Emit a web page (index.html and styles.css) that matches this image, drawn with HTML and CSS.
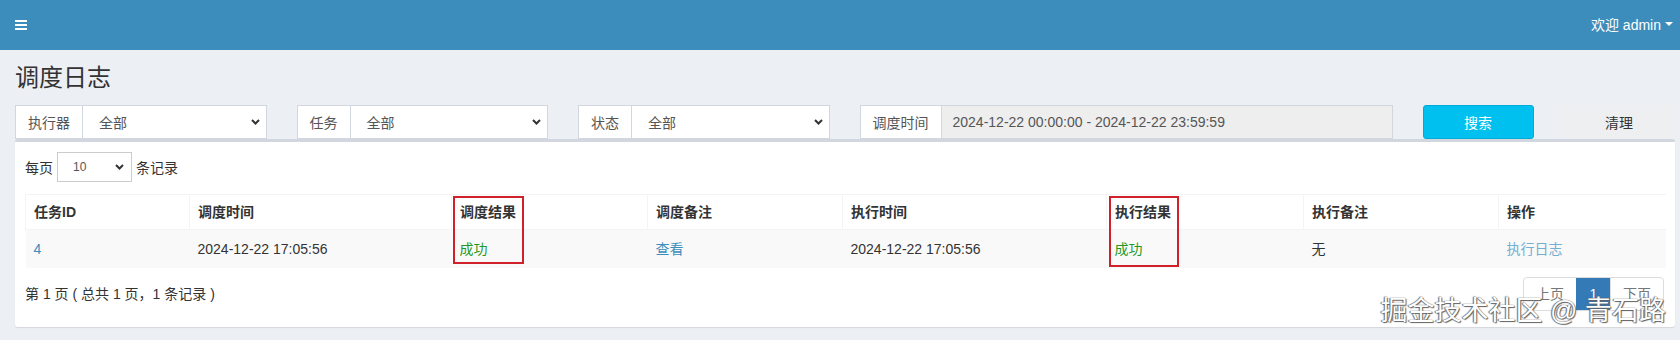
FILE: index.html
```html
<!DOCTYPE html>
<html lang="zh-CN">
<head>
  <meta charset="UTF-8">
  <meta name="viewport" content="width=device-width, initial-scale=1.0">
  <title>调度日志</title>
  <link rel="stylesheet" href="styles.css">
</head>
<body>
  <header class="topbar">
    <a class="menu-toggle" href="#">
      <svg width="12" height="10" viewBox="0 0 12 10"><rect y="0" width="12" height="2" fill="#fff"/><rect y="4" width="12" height="2" fill="#fff"/><rect y="8" width="12" height="2" fill="#fff"/></svg>
    </a>
    <div class="user-menu">欢迎 admin <span class="caret"></span></div>
  </header>

  <main class="content">
    <h1 class="page-title">调度日志</h1>

    <div class="filters">
      <div class="field">
        <span class="field-label">执行器</span>
        <div class="field-input">全部
          <svg class="chevron" width="9" height="6" viewBox="0 0 9 6"><path d="M1 1l3.5 3.5L8 1" stroke="#333" stroke-width="2" fill="none"/></svg>
        </div>
      </div>
      <div class="field">
        <span class="field-label">任务</span>
        <div class="field-input">全部
          <svg class="chevron" width="9" height="6" viewBox="0 0 9 6"><path d="M1 1l3.5 3.5L8 1" stroke="#333" stroke-width="2" fill="none"/></svg>
        </div>
      </div>
      <div class="field">
        <span class="field-label">状态</span>
        <div class="field-input">全部
          <svg class="chevron" width="9" height="6" viewBox="0 0 9 6"><path d="M1 1l3.5 3.5L8 1" stroke="#333" stroke-width="2" fill="none"/></svg>
        </div>
      </div>
      <div class="field">
        <span class="field-label">调度时间</span>
        <div class="field-input readonly">2024-12-22 00:00:00 - 2024-12-22 23:59:59</div>
      </div>
      <button class="btn btn-search">搜索</button>
      <button class="btn btn-clear">清理</button>
    </div>

    <section class="box">
      <div class="length">
        每页
        <div class="length-select">10
          <svg class="chevron" width="9" height="6" viewBox="0 0 9 6"><path d="M1 1l3.5 3.5L8 1" stroke="#333" stroke-width="2" fill="none"/></svg>
        </div>
        条记录
      </div>

      <table class="log-table">
        <colgroup>
          <col style="width:164px"><col style="width:262px"><col style="width:196px"><col style="width:195px">
          <col style="width:264px"><col style="width:197px"><col style="width:195px"><col style="width:167px">
        </colgroup>
        <thead>
          <tr>
            <th>任务ID</th><th>调度时间</th><th>调度结果</th><th>调度备注</th>
            <th>执行时间</th><th>执行结果</th><th>执行备注</th><th>操作</th>
          </tr>
        </thead>
        <tbody>
          <tr>
            <td><a class="link" href="#">4</a></td>
            <td>2024-12-22 17:05:56</td>
            <td><span class="ok">成功</span></td>
            <td><a class="link" href="#">查看</a></td>
            <td>2024-12-22 17:05:56</td>
            <td><span class="ok">成功</span></td>
            <td>无</td>
            <td><a class="link light" href="#">执行日志</a></td>
          </tr>
        </tbody>
      </table>

      <div class="table-foot">
        <div class="info">第 1 页 ( 总共 1 页，1 条记录 )</div>
        <ul class="pager">
          <li>上页</li>
          <li class="active">1</li>
          <li>下页</li>
        </ul>
      </div>

      <div class="mark mark-a"></div>
      <div class="mark mark-b"></div>
      <div class="watermark">掘金技术社区 @ 青石路</div>
    </section>
  </main>
</body>
</html>
```

FILE: styles.css
```css
body {
  margin: 0;
  font-family: "Liberation Sans", Arial, "Noto Sans CJK SC", sans-serif;
  font-size: 14px;
  color: #333;
  background-color: #ecf0f5;
}
.topbar {
  height: 50px;
  background: #3c8dbc;
  color: #fff;
  display: flex;
  align-items: center;
  justify-content: space-between;
}
.menu-toggle {
  display: flex;
  padding: 0 15px;
  margin-top: -1px;
}
.user-menu {
  display: flex;
  align-items: center;
  gap: 4px;
  padding-right: 7px;
  margin-top: -2px;
}
.caret {
  width: 0;
  height: 0;
  border-top: 4px solid #fff;
  border-left: 4px solid transparent;
  border-right: 4px solid transparent;
}
.content {
  padding: 15px 5px 15px 15px;
}
.page-title {
  margin: 0;
  font-size: 24px;
  line-height: 26px;
  font-weight: 400;
  color: #333;
}
.filters {
  margin-top: 14px;
  display: grid;
  grid-template-columns: 251.5px 251.5px 251.5px 533px 111px 111px;
  column-gap: 30px;
}
.field {
  display: flex;
  height: 34px;
}
.field-label {
  display: flex;
  align-items: center;
  padding: 0 12px;
  background: #fff;
  color: #555;
  border: 1px solid #d2d6de;
  border-right: 0;
}
.field-input {
  flex: 1;
  display: flex;
  align-items: center;
  justify-content: space-between;
  padding: 0 6px 0 16px;
  background: #fff;
  color: #555;
  border: 1px solid #d2d6de;
}
.field-input.readonly {
  background: #eee;
  padding-left: 11px;
}
.btn {
  height: 34px;
  font-family: inherit;
  font-size: 14px;
  border: 1px solid transparent;
  border-radius: 3px;
  cursor: pointer;
}
.btn-search {
  background: #00c0ef;
  border-color: #00acd6;
  color: #fff;
}
.btn-clear {
  background: #eeeff1;
  color: #333;
}
.box {
  position: relative;
  margin-top: 0;
  padding: 10px;
  background: #fff;
  border-top: 3px solid #d2d6de;
  border-radius: 3px;
  box-shadow: 0 1px 1px rgba(0, 0, 0, 0.1);
}
.length {
  display: flex;
  align-items: center;
  height: 30px;
}
.length-select {
  width: 75px;
  height: 30px;
  box-sizing: border-box;
  margin: 0 4px;
  padding: 0 7px 0 15px;
  display: flex;
  align-items: center;
  justify-content: space-between;
  border: 1px solid #ccc;
  font-size: 12px;
  color: #555;
}
.log-table {
  width: 100%;
  margin-top: 12px;
  border-collapse: collapse;
  table-layout: fixed;
}
.log-table th {
  padding: 7px 8px;
  text-align: left;
  line-height: 20px;
  font-weight: bold;
  border-top: 1px solid #f4f4f4;
  border-bottom: 1px solid #f4f4f4;
  border-left: 1px solid #f4f4f4;
}
.log-table td {
  padding: 9px 8px;
  line-height: 20px;
  background: #f9f9f9;
}
.link {
  color: #3c8dbc;
  text-decoration: none;
}
.link.light {
  color: #72afd2;
}
.ok {
  color: #1f9a1f;
}
.table-foot {
  display: flex;
  justify-content: space-between;
  align-items: flex-start;
  margin-top: 9px;
  margin-bottom: 6px;
}
.info {
  padding-top: 7px;
  line-height: 20px;
}
.pager {
  display: flex;
  list-style: none;
  margin: 0 1px 0 0;
  padding: 0;
  border: 1px solid #ddd;
  border-radius: 4px;
  overflow: hidden;
}
.pager li {
  width: 52px;
  padding: 6px 0;
  text-align: center;
  line-height: 20px;
  color: #777;
  border-left: 1px solid #ddd;
}
.pager li:first-child {
  border-left: 0;
}
.pager li.active {
  width: 33px;
  background: #337ab7;
  border-color: #337ab7;
  color: #fff;
}
.mark {
  position: absolute;
  top: 54px;
  height: 64px;
  border: 2px solid #d0212b;
}
.mark-a {
  left: 438px;
  width: 67px;
}
.mark-b {
  left: 1094px;
  width: 66px;
  height: 67px;
}
.watermark {
  position: absolute;
  right: 9px;
  top: 154px;
  font-size: 27px;
  line-height: 30px;
  color: #fff;
  text-shadow: 0 0 1px #444, 1px 1px 1px #666, -1px 0 1px #777;
  white-space: nowrap;
}
```
